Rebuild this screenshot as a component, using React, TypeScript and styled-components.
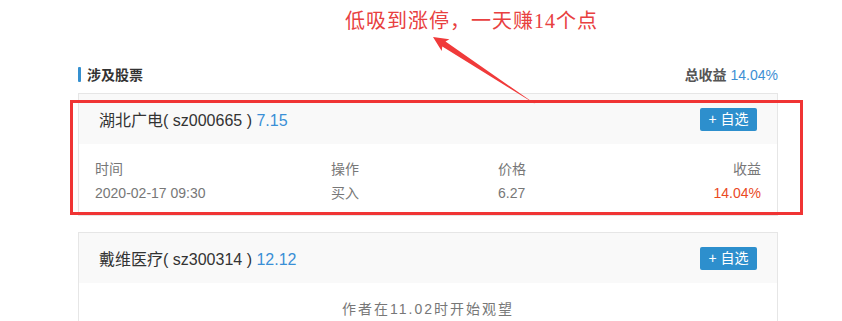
import styled, { createGlobalStyle } from "styled-components";

type Trade = {
  time: string;
  action: string;
  price: string;
  profit: string;
};

type Stock = {
  name: string;
  code: string;
  price: string;
  trade?: Trade;
  note?: string;
};

const stocks: Stock[] = [
  {
    name: "湖北广电",
    code: "sz000665",
    price: "7.15",
    trade: { time: "2020-02-17 09:30", action: "买入", price: "6.27", profit: "14.04%" },
  },
  {
    name: "戴维医疗",
    code: "sz300314",
    price: "12.12",
    note: "作者在11.02时开始观望",
  },
];

function StockCard({ stock }: { stock: Stock }) {
  return (
    <Card>
      <CardHeader>
        <StockTitle>
          {stock.name}( {stock.code} ) <Price>{stock.price}</Price>
        </StockTitle>
        <AddButton>+ 自选</AddButton>
      </CardHeader>
      {stock.trade ? (
        <TradeBody>
          <Cell>时间</Cell>
          <Cell>操作</Cell>
          <Cell>价格</Cell>
          <Cell $right>收益</Cell>
          <Cell>{stock.trade.time}</Cell>
          <Cell>{stock.trade.action}</Cell>
          <Cell>{stock.trade.price}</Cell>
          <Cell $right $red>
            {stock.trade.profit}
          </Cell>
        </TradeBody>
      ) : (
        <NoteBody>{stock.note}</NoteBody>
      )}
    </Card>
  );
}

export default function App() {
  return (
    <>
      <GlobalStyle />
      <Page>
        <SectionHead>
          <SectionTitle>涉及股票</SectionTitle>
          <Total>
            <b>总收益</b> <span>14.04%</span>
          </Total>
        </SectionHead>
        {stocks.map((s) => (
          <StockCard key={s.code} stock={s} />
        ))}

        <Annotation>低吸到涨停，一天赚14个点</Annotation>
        <Highlight />
        <Arrow viewBox="0 0 842 321" width="842" height="321">
          <polygon
            points="433,37 449.4,39.3 445.5,41.6 536,104.5 442.3,46.6 441.7,51.1"
            fill="#f03a3a"
          />
        </Arrow>
      </Page>
    </>
  );
}

const GlobalStyle = createGlobalStyle`
  body {
    margin: 0;
    background: #fff;
    font-family: "Liberation Sans", "Noto Sans CJK SC", sans-serif;
  }
`;

const Page = styled.div`
  position: relative;
  box-sizing: border-box;
  width: 842px;
  height: 321px;
  padding: 65px 64px 0 78px;
  overflow: hidden;
`;

const SectionHead = styled.div`
  display: flex;
  justify-content: space-between;
  align-items: center;
  height: 20px;
  margin-bottom: 8px;
`;

const SectionTitle = styled.h3`
  position: relative;
  margin: 0;
  padding-left: 9px;
  font-size: 14px;
  font-weight: bold;
  color: #333;
  line-height: 20px;

  &::before {
    content: "";
    position: absolute;
    left: 0;
    top: 2px;
    width: 3px;
    height: 15px;
    border-radius: 1px;
    background: #3590d0;
  }
`;

const Total = styled.div`
  font-size: 14px;
  line-height: 20px;
  color: #555;

  b {
    font-weight: bold;
  }
  span {
    color: #3d8fd4;
  }
`;

const Card = styled.div`
  box-sizing: border-box;
  width: 700px;
  border: 1px solid #e6e6e6;
  margin-bottom: 16px;
  background: #fff;
`;

const CardHeader = styled.div`
  display: flex;
  justify-content: space-between;
  align-items: center;
  height: 50px;
  padding: 0 20px;
  background: #f9f9f9;
`;

const StockTitle = styled.div`
  font-size: 16px;
  color: #333;
`;

const Price = styled.span`
  color: #3a8fd6;
`;

const AddButton = styled.button`
  height: 23px;
  width: 57px;
  padding: 0;
  border: none;
  border-radius: 2px;
  background: #2d8fcd;
  color: #fff;
  font-family: inherit;
  font-size: 14px;
  line-height: 23px;
`;

const TradeBody = styled.div`
  display: grid;
  grid-template-columns: 236px 167px 1fr auto;
  padding: 13px 16px 10px;
  font-size: 14px;
  line-height: 24px;
  color: #777;
`;

const Cell = styled.div<{ $right?: boolean; $red?: boolean }>`
  text-align: ${(p) => (p.$right ? "right" : "left")};
  color: ${(p) => (p.$red ? "#ea4a1f" : "#777")};
`;

const NoteBody = styled.div`
  padding: 16px 16px 20px;
  text-align: center;
  font-size: 14px;
  line-height: 20px;
  letter-spacing: 2px;
  color: #777;
`;

const Annotation = styled.div`
  position: absolute;
  left: 345px;
  top: 9px;
  font-family: "Liberation Serif", "Noto Sans CJK SC", serif;
  font-size: 20px;
  line-height: 24px;
  letter-spacing: 1px;
  color: #e84040;
`;

const Highlight = styled.div`
  position: absolute;
  left: 70px;
  top: 100px;
  width: 733px;
  height: 115px;
  box-sizing: border-box;
  border: 3px solid #f03434;
`;

const Arrow = styled.svg`
  position: absolute;
  left: 0;
  top: 0;
  pointer-events: none;
`;
